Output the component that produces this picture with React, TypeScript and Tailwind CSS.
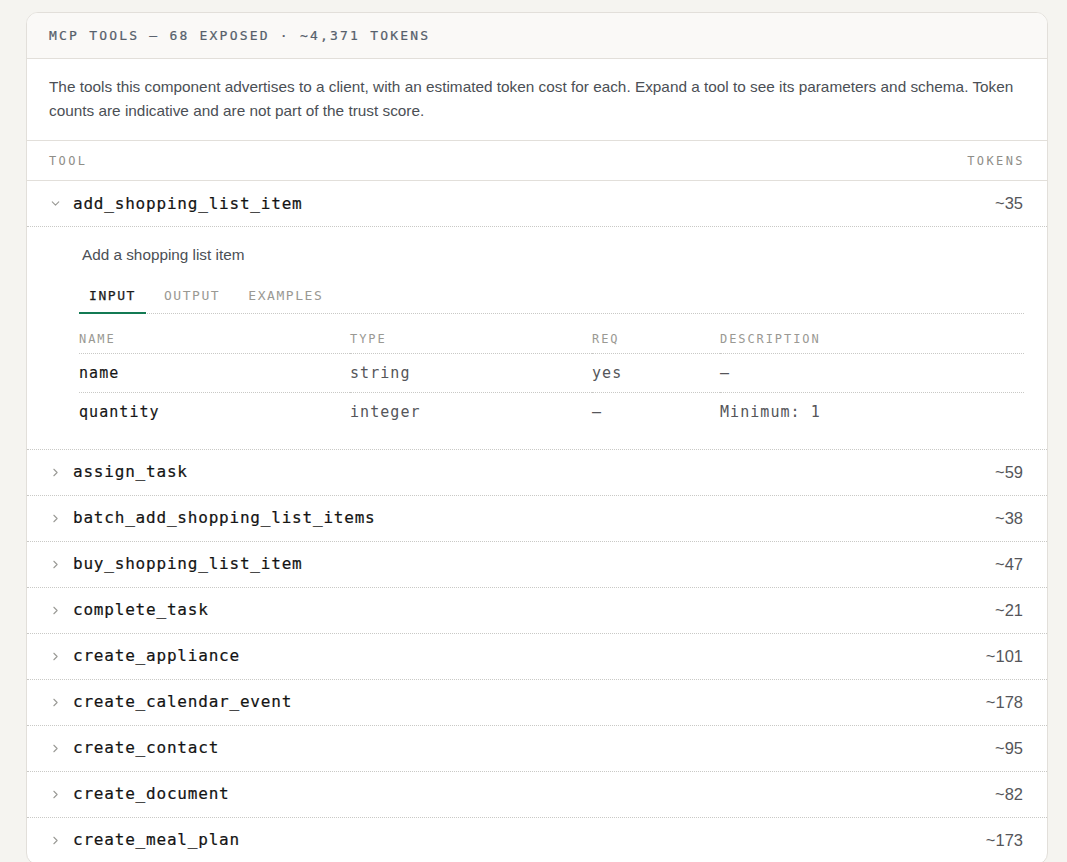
import { ChevronDown, ChevronRight } from 'lucide-react';

const mono = "font-['DejaVu_Sans_Mono',monospace]";
const sans = "font-['Liberation_Sans',Arial,sans-serif]";

const tools: [string, number][] = [
  ['assign_task', 59],
  ['batch_add_shopping_list_items', 38],
  ['buy_shopping_list_item', 47],
  ['complete_task', 21],
  ['create_appliance', 101],
  ['create_calendar_event', 178],
  ['create_contact', 95],
  ['create_document', 82],
  ['create_meal_plan', 173],
];

const params = [
  { name: 'name', type: 'string', req: 'yes', desc: '—' },
  { name: 'quantity', type: 'integer', req: '—', desc: 'Minimum: 1' },
];

const toolName = `${mono} ml-[8px] text-[16px] tracking-[0.05em] text-[#141414] [-webkit-text-stroke:0.2px_#141414]`;

function ToolRow({ name, tokens }: { name: string; tokens: number }) {
  return (
    <div className="flex items-center h-[46px] pl-[22px] pr-[24px] border-b border-dotted border-[#c9c9c6]">
      <span className="w-[16px] flex items-center text-[#9a9a96]">
        <ChevronRight className="w-[13px] h-[13px]" strokeWidth={2} />
      </span>
      <span className={toolName}>{name}</span>
      <span className={`${sans} ml-auto text-[16.5px] text-[#55565a]`}>~{tokens}</span>
    </div>
  );
}

export default function App() {
  return (
    <div className="min-h-screen bg-[#f5f4f0] pt-[12px] pl-[26px]">
      <div className="w-[1022px] bg-white border border-[#e2dfda] rounded-[12px] overflow-hidden">
        <div className="h-[46px] flex items-center px-[22px] bg-[#faf9f7] border-b border-[#e2dfda]">
          <span className={`${mono} text-[13px] tracking-[0.17em] text-[#56606b] [-webkit-text-stroke:0.2px_#56606b]`}>
            MCP TOOLS — 68 EXPOSED · ~4,371 TOKENS
          </span>
        </div>

        <p className={`${sans} px-[22px] pt-[16px] pb-[17px] text-[15.35px] leading-[24px] text-[#4b4f55] border-b border-[#e2dfda]`}>
          The tools this component advertises to a client, with an estimated token cost for each. Expand a tool to see its parameters and schema. Token counts are indicative and are not part of the trust score.
        </p>

        <div className={`${mono} flex items-center h-[40px] px-[22px] text-[12px] tracking-[0.2em] text-[#8f8e88] border-b border-[#e2dfda]`}>
          <span>TOOL</span>
          <span className="ml-auto">TOKENS</span>
        </div>

        <div className="flex items-center h-[46px] pl-[22px] pr-[24px] border-b border-dotted border-[#c9c9c6]">
          <span className="w-[16px] flex items-center text-[#9a9a96]">
            <ChevronDown className="w-[13px] h-[13px]" strokeWidth={2} />
          </span>
          <span className={toolName}>add_shopping_list_item</span>
          <span className={`${sans} ml-auto text-[16.5px] text-[#55565a]`}>~35</span>
        </div>

        <div className="pl-[52px] pr-[23px] pt-[17px] pb-[17px] border-b border-dotted border-[#c9c9c6]">
          <p className={`${sans} pl-[3px] text-[15.3px] leading-[22px] text-[#4b4f55]`}>Add a shopping list item</p>

          <div className={`${mono} mt-[20px] flex text-[13px] tracking-[0.12em] border-b border-dotted border-[#c9c9c6]`}>
            <span className="px-[10px] pb-[6px] leading-[20px] text-[#1b1b1b] [-webkit-text-stroke:0.25px_#1b1b1b] border-b-2 border-[#137a53] -mb-px">INPUT</span>
            <span className="ml-[8px] px-[10px] pb-[6px] leading-[20px] text-[#9a9993]">OUTPUT</span>
            <span className="ml-[8px] px-[10px] pb-[6px] leading-[20px] text-[#9a9993]">EXAMPLES</span>
          </div>

          <table className={`${mono} w-full border-collapse`}>
            <thead>
              <tr className="border-b border-dotted border-[#c9c9c6] text-[12px] tracking-[0.16em] text-[#9a9993] text-left">
                <th className="w-[271px] pt-[17px] pb-[6px] font-normal leading-[16px]">NAME</th>
                <th className="w-[242px] pt-[17px] pb-[6px] font-normal leading-[16px]">TYPE</th>
                <th className="w-[128px] pt-[17px] pb-[6px] font-normal leading-[16px]">REQ</th>
                <th className="pt-[17px] pb-[6px] font-normal leading-[16px]">DESCRIPTION</th>
              </tr>
            </thead>
            <tbody>
              {params.map((p, i) => (
                <tr key={p.name} className={`text-[15px] tracking-[0.07em] ${i === 0 ? 'border-b border-dotted border-[#c9c9c6]' : ''}`}>
                  <td className="h-[39px] text-[#161616] [-webkit-text-stroke:0.15px_#161616]">{p.name}</td>
                  <td className="h-[39px] text-[#55565a]">{p.type}</td>
                  <td className="h-[39px] text-[#55565a]">{p.req}</td>
                  <td className="h-[39px] text-[#55565a]">{p.desc}</td>
                </tr>
              ))}
            </tbody>
          </table>
        </div>

        {tools.map(([n, t]) => (
          <ToolRow key={n} name={n} tokens={t} />
        ))}
      </div>
    </div>
  );
}
